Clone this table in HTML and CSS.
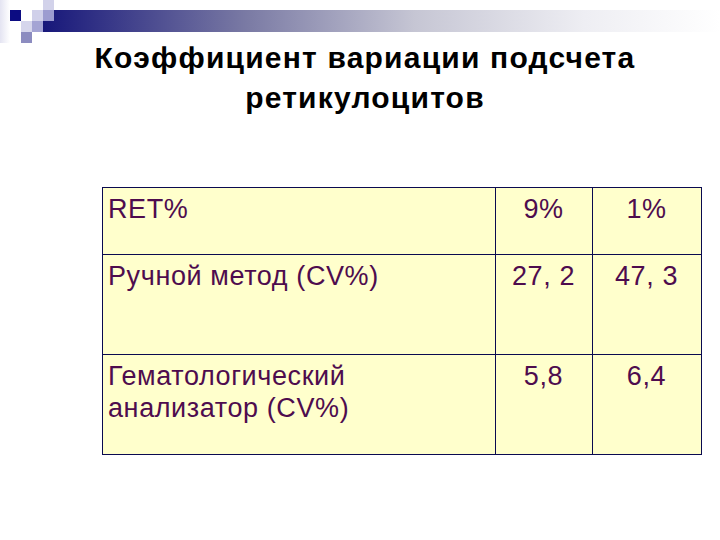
FILE: index.html
```html
<!DOCTYPE html>
<html lang="ru">
<head>
<meta charset="utf-8">
<title>Коэффициент вариации подсчета ретикулоцитов</title>
<link rel="stylesheet" href="styles.css">
</head>
<body>
<header class="decor">
  <svg class="decor-art" width="720" height="38" viewBox="0 0 720 38" aria-hidden="true">
    <defs>
      <linearGradient id="bar" x1="0" y1="0" x2="1" y2="0">
        <stop offset="0" stop-color="#17177a"/>
        <stop offset="0.3" stop-color="#7a7aa4"/>
        <stop offset="0.55" stop-color="#c6c6d4"/>
        <stop offset="0.8" stop-color="#eeeef3"/>
        <stop offset="1" stop-color="#ffffff"/>
      </linearGradient>
      <linearGradient id="fade" x1="0" y1="0" x2="1" y2="0">
        <stop offset="0" stop-color="#e4e4f2"/>
        <stop offset="1" stop-color="#ffffff"/>
      </linearGradient>
    </defs>
    <rect x="0" y="0" width="10" height="43" fill="url(#fade)"/>
    <rect x="43" y="10" width="677" height="22" fill="url(#bar)"/>
    <rect x="10" y="10" width="11" height="11" fill="#0c0c82"/>
    <rect x="43" y="0" width="11" height="10" fill="#d2d2ea"/>
    <rect x="32" y="10" width="11" height="11" fill="#d0d0ea"/>
    <rect x="43" y="10" width="11" height="11" fill="#9c9cd0"/>
    <rect x="21" y="21" width="11" height="11" fill="#d6d6ec"/>
    <rect x="32" y="21" width="11" height="11" fill="#a4a4d4"/>
    <rect x="21" y="32" width="11" height="11" fill="#8c8cc0"/>
  </svg>
</header>
<main class="slide">
  <h1 class="title">Коэффициент вариации подсчета<br>ретикулоцитов</h1>
  <table class="data">
    <colgroup>
      <col class="c-label">
      <col class="c-a">
      <col class="c-b">
    </colgroup>
    <tr class="r-head">
      <td class="label">RET%</td>
      <td class="num">9%</td>
      <td class="num">1%</td>
    </tr>
    <tr class="r-body">
      <td class="label">Ручной метод (CV%)</td>
      <td class="num">27, 2</td>
      <td class="num">47, 3</td>
    </tr>
    <tr class="r-body">
      <td class="label">Гематологический<br>анализатор (CV%)</td>
      <td class="num">5,8</td>
      <td class="num">6,4</td>
    </tr>
  </table>
</main>
</body>
</html>
```

FILE: styles.css
```css
html, body {
  margin: 0;
  padding: 0;
  background: #ffffff;
}

body {
  width: 720px;
  height: 540px;
  overflow: hidden;
  font-family: "Liberation Sans", Arial, sans-serif;
}

.decor {
  height: 38px;
}

.decor-art {
  display: block;
  overflow: visible;
}

.slide {
  display: flex;
  flex-direction: column;
}

.title {
  margin: 0 0 0 10px;
  font-size: 30px;
  line-height: 40px;
  letter-spacing: 1.2px;
  font-weight: bold;
  text-align: center;
  color: #000000;
}

.data {
  margin: 69px 0 0 102px;
  border-collapse: collapse;
  background: #ffffcc;
  color: #4e0c4e;
  font-size: 27px;
  letter-spacing: 0.6px;
  table-layout: fixed;
  width: 599px;
}

.c-label { width: 393px; }
.c-a { width: 97px; }
.c-b { width: 109px; }

.data td {
  border: 1px solid #0a0a50;
  vertical-align: top;
  padding: 5px 6px 0 5px;
  line-height: 32px;
}

.r-head td { height: 61px; }
.r-body td { height: 94px; }

.label {
  text-align: left;
}

.num {
  text-align: center;
}
```
